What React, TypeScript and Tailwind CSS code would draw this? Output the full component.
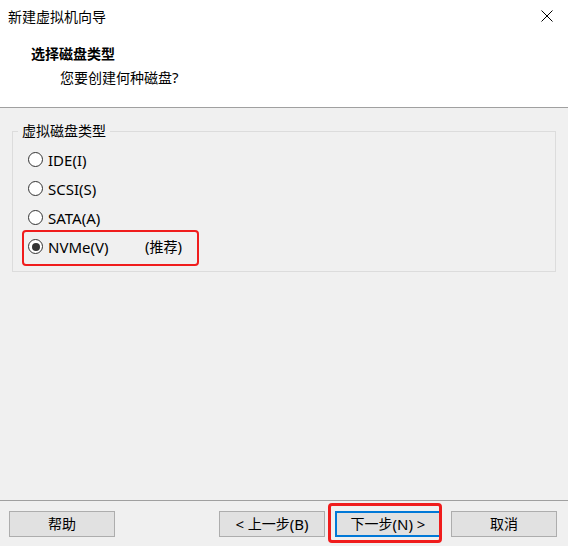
import React from "react";

const font = { fontFamily: '"Noto Sans", "Noto Sans CJK SC", sans-serif' };

function L({ children }: { children: React.ReactNode }) {
  return <span className="text-[15px]">{children}</span>;
}

function Radio({ checked }: { checked?: boolean }) {
  return (
    <span className="w-[15px] h-[15px] rounded-full border border-[#333333] bg-white flex items-center justify-center shrink-0">
      {checked && <span className="w-[8px] h-[8px] rounded-full bg-[#333333]" />}
    </span>
  );
}

function Row({ label, checked, extra }: { label: string; checked?: boolean; extra?: string }) {
  return (
    <div className="relative h-[29px] flex items-center gap-[5px]">
      <Radio checked={checked} />
      <span className={"text-[15px] " + (extra ? "w-[92px]" : "")}>{label}</span>
      {extra && (
        <span>
          <L>(</L>推荐<L>)</L>
        </span>
      )}
      {extra && (
        <div className="absolute left-[-6px] top-[-2px] w-[177px] h-[36px] border-2 border-[#f01c1c] rounded-[4px]" />
      )}
    </div>
  );
}

function Btn({ children, primary }: { children: React.ReactNode; primary?: boolean }) {
  return (
    <div className="relative">
      <div
        className={
          "w-[106px] h-[26px] flex items-center justify-center bg-[#e1e1e1] text-[14px] text-black " +
          (primary ? "border-2 border-[#0078d7]" : "border border-[#adadad]")
        }
      >
        {children}
      </div>
      {primary && (
        <div className="absolute left-[-7px] top-[-8px] w-[114px] h-[40px] border-[3px] border-[#f01c1c] rounded-[4px]" />
      )}
    </div>
  );
}

export default function App() {
  return (
    <div className="w-[568px] h-[546px] bg-[#f0f0f0] flex flex-col text-[14px] text-black leading-[20px]" style={font}>
      <div className="h-[107px] bg-white flex flex-col">
        <div className="h-[34px] flex items-start pt-[7px] pl-[8px] pr-[15px]">
          <span className="flex-1">新建虚拟机向导</span>
          <svg width="12" height="12" viewBox="0 0 12 12" className="mt-[3px]">
            <path d="M0.5 0.5 L11.5 11.5 M11.5 0.5 L0.5 11.5" stroke="#000" strokeWidth="1" fill="none" />
          </svg>
        </div>
        <div className="pl-[31px] pt-[10px] font-bold">选择磁盘类型</div>
        <div className="pl-[60px] pt-[3px]">
          您要创建何种磁盘<L>?</L>
        </div>
      </div>
      <div className="h-px bg-[#a0a0a0]" />
      <div className="flex-1 px-[12px] pt-[13px]">
        <fieldset className="border border-[#dcdcdc] m-0 p-0 pb-[10px]">
          <legend className="ml-[5px] px-[4px] leading-[20px]">虚拟磁盘类型</legend>
          <div className="pl-[15px] pt-[4px] flex flex-col">
            <Row label="IDE(I)" />
            <Row label="SCSI(S)" />
            <Row label="SATA(A)" />
            <Row label="NVMe(V)" checked extra="(推荐)" />
          </div>
        </fieldset>
      </div>
      <div className="h-px bg-[#a0a0a0]" />
      <div className="h-[45px] flex items-start pt-[10px] pl-[9px] pr-[11px]">
        <Btn>帮助</Btn>
        <div className="flex-1" />
        <div className="flex gap-[10px]">
          <Btn>
            <L>&lt;&nbsp;</L>上一步<L>(B)</L>
          </Btn>
          <Btn primary>
            下一步<L>(N)&nbsp;&gt;</L>
          </Btn>
          <Btn>取消</Btn>
        </div>
      </div>
    </div>
  );
}
